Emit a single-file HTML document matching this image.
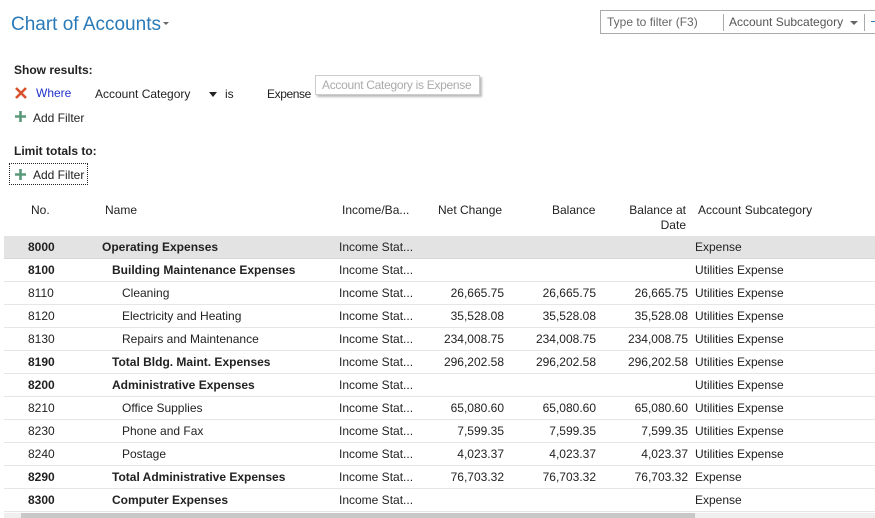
<!DOCTYPE html>
<html><head><meta charset="utf-8"><style>
*{margin:0;padding:0;box-sizing:border-box}
body{width:875px;height:518px;overflow:hidden;background:#fff;font-family:"Liberation Sans",sans-serif;font-size:12px;color:#222;position:relative}
.a{position:absolute;white-space:nowrap}
.row{position:absolute;left:4px;width:871px;height:23px;border-bottom:1px solid #e6e6e6}
.row span{position:absolute;top:4px;white-space:nowrap}
.b{font-weight:bold}
.r{text-align:right}
</style></head><body>
<div class="a" style="left:11px;top:14px;font-size:19px;color:#2a7ab8">Chart of Accounts</div>
<div class="a" style="left:163px;top:22px;width:0;height:0;border-left:3px solid transparent;border-right:3px solid transparent;border-top:3px solid #666"></div>

<div class="a" style="left:600px;top:10px;width:280px;height:24px;border:1px solid #aaa"></div>
<div class="a" style="left:607px;top:15px;color:#666">Type to filter (F3)</div>
<div class="a" style="left:723px;top:14px;width:1px;height:17px;background:#aaa"></div>
<div class="a" style="left:729px;top:15px;color:#555">Account Subcategory</div>
<div class="a" style="left:850px;top:21px;width:0;height:0;border-left:4px solid transparent;border-right:4px solid transparent;border-top:4px solid #666"></div>
<div class="a" style="left:864px;top:14px;width:1px;height:17px;background:#aaa"></div>
<div class="a" style="left:871px;top:21px;width:4px;height:1px;background:#2a7ab8"></div>

<div class="a b" style="left:14px;top:63px">Show results:</div>
<svg class="a" style="left:15px;top:87px" width="12" height="12"><path d="M1 1L11 11M11 1L1 11" stroke="#d9532c" stroke-width="2.6"/></svg>
<div class="a" style="left:36px;top:86px;color:#2233cc">Where</div>
<div class="a" style="left:95px;top:87px">Account Category</div>
<div class="a" style="left:209px;top:92px;width:0;height:0;border-left:4px solid transparent;border-right:4px solid transparent;border-top:5px solid #222"></div>
<div class="a" style="left:225px;top:87px">is</div>
<div class="a" style="left:267px;top:87px;letter-spacing:-0.4px">Expense</div>
<div class="a" style="left:315px;top:75px;width:165px;height:20px;border:1px solid #ccc;box-shadow:2px 2px 2px #bbb;background:#fff;color:#aaa;padding:2px 0 0 6px;letter-spacing:-0.3px">Account Category is Expense</div>
<svg class="a" style="left:15px;top:111px" width="11" height="11"><path d="M5.5 0V11M0 5.5H11" stroke="#5a9a7a" stroke-width="2.6"/></svg>
<div class="a" style="left:33px;top:111px">Add Filter</div>

<div class="a b" style="left:14px;top:144px">Limit totals to:</div>
<div class="a" style="left:9px;top:163px;width:79px;height:22px;border:1px dotted #222"></div>
<svg class="a" style="left:15px;top:169px" width="11" height="11"><path d="M5.5 0V11M0 5.5H11" stroke="#5a9a7a" stroke-width="2.6"/></svg>
<div class="a" style="left:33px;top:168px">Add Filter</div>

<div class="a" style="left:31px;top:203px">No.</div>
<div class="a" style="left:105px;top:203px">Name</div>
<div class="a" style="left:342px;top:203px">Income/Ba...</div>
<div class="a" style="left:438px;top:203px">Net Change</div>
<div class="a" style="left:552px;top:203px">Balance</div>
<div class="a" style="right:189px;top:203px;text-align:right;line-height:15px">Balance at<br>Date</div>
<div class="a" style="left:698px;top:203px">Account Subcategory</div>

<div class="row" style="top:236px;background:#e3e3e3;border-bottom:1px solid #d8d8d8"><span class="b" style="left:24px">8000</span><span class="b" style="left:98px">Operating Expenses</span><span style="left:335px">Income Stat...</span><span style="left:691px">Expense</span></div>
<div class="row" style="top:259px"><span class="b" style="left:24px">8100</span><span class="b" style="left:108px">Building Maintenance Expenses</span><span style="left:335px">Income Stat...</span><span style="left:691px">Utilities Expense</span></div>
<div class="row" style="top:282px"><span style="left:24px">8110</span><span style="left:118px">Cleaning</span><span style="left:335px">Income Stat...</span><span style="right:371px">26,665.75</span><span style="right:279px">26,665.75</span><span style="right:187px">26,665.75</span><span style="left:691px">Utilities Expense</span></div>
<div class="row" style="top:305px"><span style="left:24px">8120</span><span style="left:118px">Electricity and Heating</span><span style="left:335px">Income Stat...</span><span style="right:371px">35,528.08</span><span style="right:279px">35,528.08</span><span style="right:187px">35,528.08</span><span style="left:691px">Utilities Expense</span></div>
<div class="row" style="top:328px"><span style="left:24px">8130</span><span style="left:118px">Repairs and Maintenance</span><span style="left:335px">Income Stat...</span><span style="right:371px">234,008.75</span><span style="right:279px">234,008.75</span><span style="right:187px">234,008.75</span><span style="left:691px">Utilities Expense</span></div>
<div class="row" style="top:351px"><span class="b" style="left:24px">8190</span><span class="b" style="left:108px">Total Bldg. Maint. Expenses</span><span style="left:335px">Income Stat...</span><span style="right:371px">296,202.58</span><span style="right:279px">296,202.58</span><span style="right:187px">296,202.58</span><span style="left:691px">Utilities Expense</span></div>
<div class="row" style="top:374px"><span class="b" style="left:24px">8200</span><span class="b" style="left:108px">Administrative Expenses</span><span style="left:335px">Income Stat...</span><span style="left:691px">Utilities Expense</span></div>
<div class="row" style="top:397px"><span style="left:24px">8210</span><span style="left:118px">Office Supplies</span><span style="left:335px">Income Stat...</span><span style="right:371px">65,080.60</span><span style="right:279px">65,080.60</span><span style="right:187px">65,080.60</span><span style="left:691px">Utilities Expense</span></div>
<div class="row" style="top:420px"><span style="left:24px">8230</span><span style="left:118px">Phone and Fax</span><span style="left:335px">Income Stat...</span><span style="right:371px">7,599.35</span><span style="right:279px">7,599.35</span><span style="right:187px">7,599.35</span><span style="left:691px">Utilities Expense</span></div>
<div class="row" style="top:443px"><span style="left:24px">8240</span><span style="left:118px">Postage</span><span style="left:335px">Income Stat...</span><span style="right:371px">4,023.37</span><span style="right:279px">4,023.37</span><span style="right:187px">4,023.37</span><span style="left:691px">Utilities Expense</span></div>
<div class="row" style="top:466px"><span class="b" style="left:24px">8290</span><span class="b" style="left:108px">Total Administrative Expenses</span><span style="left:335px">Income Stat...</span><span style="right:371px">76,703.32</span><span style="right:279px">76,703.32</span><span style="right:187px">76,703.32</span><span style="left:691px">Expense</span></div>
<div class="row" style="top:489px"><span class="b" style="left:24px">8300</span><span class="b" style="left:108px">Computer Expenses</span><span style="left:335px">Income Stat...</span><span style="left:691px">Expense</span></div>
<div class="a" style="left:4px;top:513px;width:871px;height:5px;background:#efefef"></div>
<div class="a" style="left:21px;top:513px;width:674px;height:5px;background:#c8c8c8"></div>
</body></html>
